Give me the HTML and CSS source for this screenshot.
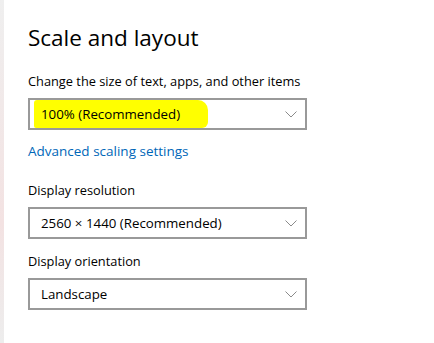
FILE: index.html
```html
<!DOCTYPE html>
<html lang="en">
<head>
  <meta charset="UTF-8" />
  <title>Scale and layout</title>
  <link rel="stylesheet" href="styles.css">
</head>
<body>
  <div class="edge"></div>
  <div class="panel">
    <h2>Scale and layout</h2>

    <div class="field">
      <label>Change the size of text, apps, and other items</label>
      <div class="dropdown">
        <span class="value marked">100% (Recommended)</span>
        <svg class="chevron" width="12" height="7" viewBox="0 0 12 7"><path d="M0.5 0.5 L6 6 L11.5 0.5" fill="none" stroke="#8a8a8a" stroke-width="1"/></svg>
      </div>
    </div>

    <a class="link" href="#">Advanced scaling settings</a>

    <div class="field">
      <label>Display resolution</label>
      <div class="dropdown">
        <span class="value">2560 × 1440 (Recommended)</span>
        <svg class="chevron" width="12" height="7" viewBox="0 0 12 7"><path d="M0.5 0.5 L6 6 L11.5 0.5" fill="none" stroke="#8a8a8a" stroke-width="1"/></svg>
      </div>
    </div>

    <div class="field">
      <label>Display orientation</label>
      <div class="dropdown">
        <span class="value">Landscape</span>
        <svg class="chevron" width="12" height="7" viewBox="0 0 12 7"><path d="M0.5 0.5 L6 6 L11.5 0.5" fill="none" stroke="#8a8a8a" stroke-width="1"/></svg>
      </div>
    </div>
  </div>
</body>
</html>
```

FILE: styles.css
```css
body {
  margin: 0;
  background: #fff;
  font-family: 'Open Sans', 'Noto Sans', sans-serif;
  color: #000;
  display: flex;
  min-height: 343px;
}
.edge {
  width: 4px;
  background: linear-gradient(180deg, #efefef 0%, #f2e6e6 45%, #f3e2e2 65%, #ededed 100%);
}
.panel {
  padding: 24px 0 0 24px;
  display: flex;
  flex-direction: column;
}
h2 {
  font-weight: 400;
  font-size: 22.5px;
  margin: 0 0 20px;
  line-height: 28px;
}
.field {
  display: flex;
  flex-direction: column;
}
label {
  font-size: 12.8px;
  line-height: 18px;
  margin-bottom: 8px;
}
.dropdown {
  box-sizing: border-box;
  width: 279px;
  height: 32px;
  border: 2px solid #999;
  display: flex;
  align-items: center;
  justify-content: space-between;
  padding: 0 8px 0 11px;
  font-size: 13.3px;
}
.marked {
  background: #ffff00;
  margin-left: -7px;
  padding: 5px 28px 5px 7px;
  border-radius: 3px 10px 6px 2px;
}
.chevron {
  margin-top: 1px;
}
.link {
  color: #0067b8;
  text-decoration: none;
  font-size: 13.5px;
  line-height: 18px;
  margin: 12px 0 21px;
}
.field + .field {
  margin-top: 13px;
}
```
